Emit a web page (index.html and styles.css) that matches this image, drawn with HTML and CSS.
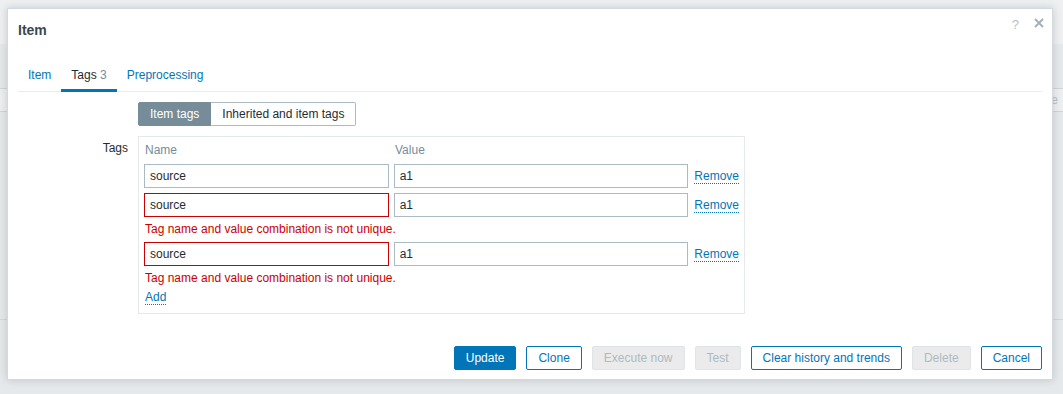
FILE: index.html
```html
<!DOCTYPE html>
<html lang="en">
<head>
<meta charset="utf-8">
<title>Item</title>
<link rel="stylesheet" href="styles.css">
</head>
<body>
<div class="page">
  <div class="page-top"></div>
  <div class="page-toolbar"><span class="page-btn">Delete</span></div>
  <div class="page-row"></div>
</div>

<div class="modal" role="dialog">
  <div class="modal-header">
    <h4 class="modal-title">Item</h4>
    <span class="hdr-help">?</span>
    <span class="hdr-close">
      <svg width="10" height="10" viewBox="0 0 10 10"><path d="M1 1L9 9M9 1L1 9" stroke="#a3b2ba" stroke-width="2" fill="none"/></svg>
    </span>
  </div>
  <div class="modal-body">
    <ul class="tabs">
      <li class="tab"><a>Item</a></li>
      <li class="tab active"><a>Tags <span class="count">3</span></a></li>
      <li class="tab"><a>Preprocessing</a></li>
    </ul>

    <div class="form">
      <div class="form-label"></div>
      <div class="form-field">
        <div class="segmented">
          <span class="seg on">Item tags</span><span class="seg">Inherited and item tags</span>
        </div>
      </div>

      <div class="form-label tags-label">Tags</div>
      <div class="form-field">
        <div class="tags-table">
          <div class="tags-head"><span class="col-name">Name</span><span class="col-value">Value</span></div>
          <div class="tag-row">
            <input class="inp inp-name" value="source"><input class="inp inp-value" value="a1"><a class="link">Remove</a>
          </div>
          <div class="tag-row">
            <input class="inp inp-name invalid" value="source"><input class="inp inp-value" value="a1"><a class="link">Remove</a>
          </div>
          <div class="tag-error">Tag name and value combination is not unique.</div>
          <div class="tag-row">
            <input class="inp inp-name invalid" value="source"><input class="inp inp-value" value="a1"><a class="link">Remove</a>
          </div>
          <div class="tag-error">Tag name and value combination is not unique.</div>
          <div class="tag-add"><a class="link">Add</a></div>
        </div>
      </div>
    </div>
  </div>
  <div class="modal-footer">
    <button class="btn primary">Update</button>
    <button class="btn alt">Clone</button>
    <button class="btn disabled">Execute now</button>
    <button class="btn disabled">Test</button>
    <button class="btn alt">Clear history and trends</button>
    <button class="btn disabled">Delete</button>
    <button class="btn alt">Cancel</button>
  </div>
</div>
</body>
</html>
```

FILE: styles.css
```css
* { box-sizing: border-box; }

html, body {
  margin: 0;
  padding: 0;
}

body {
  width: 1063px;
  height: 394px;
  overflow: hidden;
  background: #e6e9eb;
  font-family: "Liberation Sans", Arial, sans-serif;
  font-size: 12px;
  color: #1f2c33;
  position: relative;
}

/* background page (behind the overlay) */
.page {
  width: 1063px;
}
.page-top {
  height: 44px;
  background: #eef0f1;
}
.page-toolbar {
  margin-top: 44px;
  height: 24px;
  border-top: 1px solid #cfd5d8;
  border-bottom: 1px solid #cfd5d8;
  background: #edeff0;
  display: flex;
  justify-content: flex-end;
  align-items: center;
  padding-right: 5px;
  color: #b5c0c6;
}
.page-btn { line-height: 18px; }
.page-row {
  margin-top: 207px;
  border-top: 1px solid #d3d8db;
  height: 40px;
}

/* modal */
.modal {
  position: absolute;
  left: 7px;
  top: 8px;
  width: 1046px;
  height: 372px;
  background: #fff;
  border: 1px solid #d3d9dc;
  box-shadow: 0 0 8px rgba(90, 105, 115, 0.28);
  display: flex;
  flex-direction: column;
}

.modal-header {
  height: 43px;
  padding: 12px 10px 0 10px;
  display: flex;
  align-items: flex-start;
}
.modal-title {
  margin: 0;
  flex: 1;
  font-size: 14px;
  font-weight: bold;
  line-height: 18px;
  color: #3b4850;
}
.hdr-help {
  font-size: 13px;
  line-height: 18px;
  color: #b3bfc6;
  margin-top: -5px;
  margin-right: 15px;
}
.hdr-close {
  display: flex;
  margin-top: -3px;
  margin-right: -2px;
}

.modal-body {
  padding: 10px 10px 0 10px;
  flex: 1;
}

.tabs {
  list-style: none;
  margin: 0;
  padding: 0;
  display: flex;
  border-bottom: 1px solid #ebebeb;
}
.tab {
  padding: 4px 10px 5px 10px;
  border-bottom: 3px solid transparent;
  margin-bottom: -1px;
  line-height: 18px;
  color: #0275b8;
}
.tab a { color: inherit; }
.tab.active {
  border-bottom-color: #0275b8;
  color: #1f2c33;
}
.count { color: #768d99; }

.form {
  margin-top: 10px;
  display: grid;
  grid-template-columns: 110px 1fr;
  column-gap: 10px;
  row-gap: 10px;
}
.form-label {
  text-align: right;
  line-height: 18px;
}
.tags-label { padding-top: 3px; }

.segmented {
  display: inline-flex;
  height: 24px;
}
.seg {
  display: inline-flex;
  align-items: center;
  padding: 0 11px;
  border: 1px solid #acbbc2;
  background: #fff;
  color: #1f2c33;
}
.seg + .seg { border-left: none; }
.seg:first-child { border-radius: 2px 0 0 2px; }
.seg:last-child { border-radius: 0 2px 2px 0; }
.seg.on {
  background: #768d99;
  border-color: #768d99;
  color: #fff;
}

.tags-table {
  width: 607px;
  border: 1px solid #e6e9eb;
  padding: 4px 5px 7px 5px;
}
.tags-head {
  display: flex;
  line-height: 18px;
  color: #768d99;
}
.col-name { width: 250px; padding-left: 1px; }
.col-value { padding-left: 1px; }

.tag-row {
  display: flex;
  align-items: center;
  margin-top: 5px;
}
.inp {
  height: 24px;
  border: 1px solid #acbbc2;
  background: #fff;
  padding: 0 5px;
  font-family: "Liberation Sans", Arial, sans-serif;
  font-size: 12px;
  color: #1f2c33;
  outline: none;
  margin: 0;
}
.inp-name { width: 245px; }
.inp-value { width: 295px; margin-left: 5px; }
.inp.invalid { border-color: #cc0000; }

.link {
  color: #0275b8;
  border-bottom: 1px dotted #0275b8;
  cursor: pointer;
}
.tag-row .link { margin-left: 6px; }

.tag-error {
  margin-top: 3px;
  margin-bottom: -1px;
  line-height: 18px;
  color: #cc0000;
  padding-left: 1px;
}
.tag-add {
  margin-top: 2px;
  line-height: 18px;
  padding-left: 1px;
}

.modal-footer {
  display: flex;
  justify-content: flex-end;
  gap: 10px;
  padding: 0 10px 9px 10px;
}
.btn {
  height: 24px;
  padding: 0 11px;
  border: 1px solid #0275b8;
  border-radius: 2px;
  background: #fff;
  color: #0275b8;
  font-family: "Liberation Sans", Arial, sans-serif;
  font-size: 12px;
  line-height: 22px;
  margin: 0;
}
.btn.primary {
  background: #0275b8;
  color: #fff;
}
.btn.disabled {
  background: #ebebeb;
  border-color: #dfe4e7;
  color: #acbbc2;
}
```
